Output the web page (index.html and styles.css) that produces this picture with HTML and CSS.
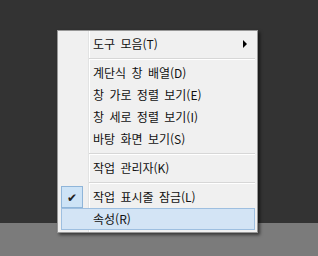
FILE: index.html
```html
<!DOCTYPE html>
<html lang="ko">
<head>
<meta charset="utf-8">
<link rel="stylesheet" href="styles.css">
</head>
<body>
<div class="desk">
  <div class="wall"></div>
  <div class="taskbar"></div>
  <div class="menu">
    <div class="item has-sub">도구 모음(T)<span class="arrow"></span></div>
    <div class="sep"></div>
    <div class="item">계단식 창 배열(D)</div>
    <div class="item">창 가로 정렬 보기(E)</div>
    <div class="item">창 세로 정렬 보기(I)</div>
    <div class="item">바탕 화면 보기(S)</div>
    <div class="sep"></div>
    <div class="item">작업 관리자(K)</div>
    <div class="sep"></div>
    <div class="item checked"><span class="check">✔</span>작업 표시줄 잠금(L)</div>
    <div class="item hover">속성(R)</div>
  </div>
</div>
</body>
</html>
```
FILE: styles.css
```css
html, body {
  margin: 0;
  padding: 0;
}
body {
  width: 318px;
  height: 256px;
  overflow: hidden;
  font-family: "Noto Sans CJK KR", "Malgun Gothic", sans-serif;
}
.desk {
  position: relative;
  display: flex;
  flex-direction: column;
  width: 318px;
  height: 256px;
}
.wall {
  height: 223px;
  background: #333333;
}
.taskbar {
  flex: 1;
  background: #7b7b7b;
}
.menu {
  position: absolute;
  left: 57px;
  top: 30px;
  width: 195px;
  padding: 2px;
  border: 1px solid #979797;
  background:
    linear-gradient(to right,
      transparent 30px, #e2e3e3 30px, #e2e3e3 31px,
      #ffffff 31px, #ffffff 32px, transparent 32px),
    #f0f0f0;
  box-shadow: 2px 2px 3px rgba(0, 0, 0, 0.55);
  display: flex;
  flex-direction: column;
}
.item {
  position: relative;
  height: 22px;
  line-height: 22px;
  padding-left: 33px;
  font-size: 12px;
  word-spacing: 2px;
  color: #111;
  white-space: nowrap;
}
.sep {
  height: 7px;
  display: flex;
  flex-direction: column;
  justify-content: center;
  padding-left: 29px;
}
.sep::before {
  content: "";
  display: block;
  height: 1px;
  background: #d7d7d7;
  border-bottom: 1px solid #ffffff;
}
.arrow {
  position: absolute;
  right: 8px;
  top: 7px;
  width: 0;
  height: 0;
  border-top: 4px solid transparent;
  border-bottom: 4px solid transparent;
  border-left: 4px solid #000;
}
.check {
  position: absolute;
  left: 1px;
  top: 0;
  width: 20px;
  height: 20px;
  border: 1px solid #8fb5d9;
  background: #cde3f6;
  font-size: 12px;
  line-height: 20px;
  text-align: center;
  color: #222;
  word-spacing: 0;
}
.hover {
  margin-left: 1px;
  padding-left: 31px;
  height: 20px;
  line-height: 20px;
  border: 1px solid #9ebfe0;
  background: #d3e4f5;
}
```
